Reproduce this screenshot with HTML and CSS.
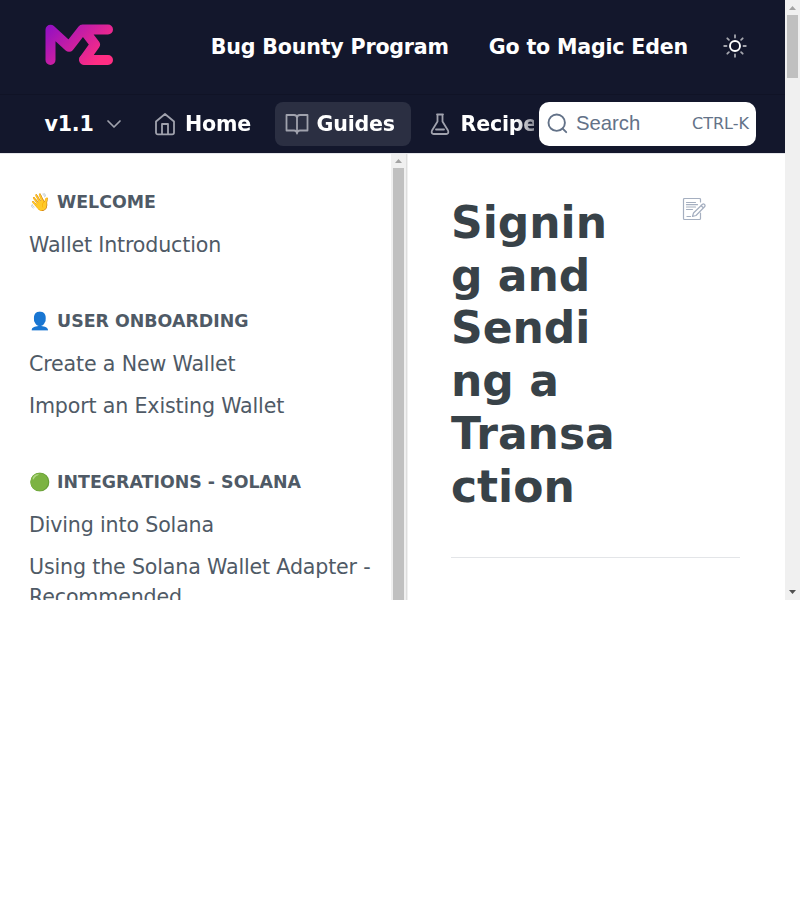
FILE: index.html
```html
<!DOCTYPE html>
<html lang="en">
<head>
<meta charset="utf-8">
<title>Signing and Sending a Transaction</title>
<link rel="stylesheet" href="styles.css">
</head>
<body>
<div class="viewport">
  <div class="page">
    <header class="header">
      <div class="topbar">
        <svg class="logo" width="70" height="42" viewBox="0 0 70 42">
          <defs><linearGradient id="brand" gradientUnits="userSpaceOnUse" x1="4" y1="2" x2="46" y2="44"><stop offset="0" stop-color="#9410c2"/><stop offset="1" stop-color="#ff2d83"/></linearGradient></defs>
          <g fill="none" stroke="url(#brand)" stroke-width="10" stroke-linecap="round" stroke-linejoin="round">
            <path d="M5.500 36V5.800L24 22.800 37.500 5.500H63M38.500 5.500L50 20.500 39 36H63"/>
            <path stroke-width="6" d="M50 20.500L37.500 34.500"/>
          </g>
        </svg>
        <nav class="toplinks"><a>Bug Bounty Program</a><a>Go to Magic Eden</a></nav>
        <svg class="sun" width="24" height="24" viewBox="0 0 24 24" fill="none" stroke="#fff" stroke-linecap="round">
          <circle cx="12" cy="12" r="5" stroke-width="1.9"/>
          <path stroke-width="1.8" opacity=".62" d="M12 1.200v2.300M12 20.500v2.300M1.200 12h2.300M20.500 12H22.800M4.300 4.300L5.900 5.900M18.100 18.100l1.600 1.600M4.300 19.700L5.900 18.100M18.100 5.900l1.600-1.600"/>
        </svg>
      </div>
      <div class="subbar">
        <div class="version">v1.1
          <svg width="16" height="10" viewBox="0 0 16 10"><path d="M2 2l6 6 6-6" fill="none" stroke="#a0a2ad" stroke-width="1.7" stroke-linecap="round" stroke-linejoin="round"/></svg>
        </div>
        <nav class="tabs">
          <a class="tab home"><svg width="22" height="24" viewBox="0 0 22 24"><path d="M2 9.500L11 2l9 7.500V20.500a1.800 1.800 0 0 1-1.800 1.800H3.800A1.800 1.800 0 0 1 2 20.500zM8 22V12h6v10"/></svg>Home</a>
          <a class="tab active"><svg width="24" height="24" viewBox="0 0 24 24"><path d="M12 6a3 3 0 0 0-3-3H1.500v15.500H9a3 3 0 0 1 3 2.500 3 3 0 0 1 3-2.500h7.500V3H15a3 3 0 0 0-3 3zV21.500"/></svg>Guides</a>
          <a class="tab recipes"><svg width="20" height="24" viewBox="0 0 20 24"><path d="M7 2.500h6M7.500 2.500v7L2 18.500c-.9 2 0 3.500 1.700 3.500h12.600c1.700 0 2.600-1.500 1.700-3.500L12.500 9.500V2.500M6 17.500h8"/></svg>Recipes</a>
        </nav>
        <div class="search">
          <svg width="22" height="22" viewBox="0 0 22 22" fill="none" stroke="#637288" stroke-width="1.900" stroke-linecap="round"><circle cx="9.700" cy="9.700" r="8.200"/><path d="M15.700 15.700l3.500 3.500"/></svg>
          <span class="label">Search</span><span class="keys">CTRL-K</span>
        </div>
      </div>
    </header>
    <main class="body">
      <aside class="sidebar">
        <section><h2><span class="emoji">👋</span> WELCOME</h2><a>Wallet Introduction</a></section>
        <section><h2><span class="emoji">👤</span> USER ONBOARDING</h2><a>Create a New Wallet</a><a>Import an Existing Wallet</a></section>
        <section><h2><span class="emoji">🟢</span> INTEGRATIONS - SOLANA</h2><a>Diving into Solana</a><a>Using the Solana Wallet Adapter - Recommended</a></section>
      </aside>
      <div class="scroll inner"><svg width="7" height="4" viewBox="0 0 7 4"><path d="M3.500 0L7 4H0z" fill="#a3a3a3"/></svg><div class="thumb"></div></div>
      <article class="content">
        <div class="title-row">
          <h1>Signing and Sending a Transaction</h1>
          <svg class="edit" width="24" height="24" viewBox="0 0 24 24" fill="none" stroke="#a5afc0" stroke-width="1.200" stroke-linejoin="round" stroke-linecap="round"><path d="M18.500 5V2.500a1 1 0 0 0-1-1H2.500a1 1 0 0 0-1 1v19a1 1 0 0 0 1 1H17.500a1 1 0 0 0 1-1V16M4.500 5.500h9M4.500 7.700h11M4.500 10h9M4.500 12.500h6M5 19.500h3.500M10.500 19.500l1-3.500 9-8.800q1-.7 2 .3t.3 2L14 18.500zM19 8.500l2 2"/></svg>
        </div>
        <hr>
      </article>
    </main>
  </div>
  <div class="scroll outer">
    <svg width="7" height="4" viewBox="0 0 7 4"><path d="M3.500 0L7 4H0z" fill="#a3a3a3"/></svg>
    <div class="thumb"></div>
    <svg class="down" width="7" height="4" viewBox="0 0 7 4"><path d="M0 0h7L3.500 4z" fill="#505050"/></svg>
  </div>
</div>
</body>
</html>
```
FILE: styles.css
```css
* { box-sizing: border-box; }
body { margin: 0; background: #fff; font-family: "DejaVu Sans", sans-serif; font-size: 20.6px; letter-spacing: -.16px; line-height: 30px; color: #4f5a66; }
svg { display: block; flex: none; }
.viewport { display: flex; height: 600px; overflow: hidden; }
.page { width: 785px; height: 600px; display: flex; flex-direction: column; overflow: hidden; }
.header { flex: none; height: 153px; background: #13172c; color: #fff; font-weight: 700; letter-spacing: -.2px; }
.topbar { height: 94px; padding: 0 39px 1px 45px; display: flex; align-items: center; }
.logo { margin-top: -3px; }
.toplinks { margin-left: auto; display: flex; gap: 40px; }
.sun { margin: -1px 0 0 34px; position: relative; left: .5px; }
.subbar { height: 59px; border-top: 1px solid #101326; padding: 6px 29px 7px 44.500px; display: flex; align-items: center; }
.version { width: 99.500px; flex: none; display: flex; align-items: center; gap: 12px; }
.tabs { width: 390px; flex: none; display: flex; overflow: hidden; -webkit-mask-image: linear-gradient(to right, #000 372px, rgba(0,0,0,.5)); mask-image: linear-gradient(to right, #000 372px, rgba(0,0,0,.5)); }
.tab { flex: none; height: 44px; display: flex; align-items: center; border-radius: 8px; }
.tab svg { fill: none; stroke: #a0a2ad; stroke-width: 1.800; stroke-linejoin: round; stroke-linecap: round; }
.home { width: 131px; padding-left: 10px; gap: 9px; }
.active { width: 136px; padding-left: 10px; gap: 7.500px; background: #2b2f42; }
.recipes { padding-left: 19px; gap: 10.500px; }
.search { margin-left: 5px; width: 217px; height: 44px; border-radius: 10px; background: #fff; display: flex; align-items: center; padding: 0 7px 0 8px; color: #637288; font-weight: 400; letter-spacing: 0; }
.label { margin: -1px 0 0 7px; font-family: "Liberation Sans", sans-serif; font-size: 20.3px; }
.keys { margin-left: auto; font-size: 16px; }
.body { flex: 1; min-height: 0; display: flex; border-top: 1px solid #e5e6ea; }
.sidebar { width: 391px; flex: none; padding: 33px 16px 0 29px; overflow: hidden; }
.sidebar section { margin-bottom: 46px; }
.sidebar h2 { margin: 0 0 13px; font-size: 17.400px; letter-spacing: 0; line-height: 30px; font-weight: 700; white-space: nowrap; }
.sidebar a { display: block; margin-bottom: 12px; }
.scroll { background: #f0f0f0; display: flex; flex-direction: column; align-items: center; }
.inner { width: 16px; flex: none; padding: 5px 1px 0 1px; border-right: 1px solid #dedede; }
.inner .thumb { width: 11px; flex: 1; margin-top: 5px; background: #c0c0c0; }
.outer { width: 15px; padding: 6px 0; }
.outer .thumb { width: 11px; height: 63px; margin-top: 5px; background: #c0c0c0; }
.down { margin-top: auto; }
.content { flex: 1; padding: 42.800px 45px 0 43px; border-left: 1px solid #f0f0f0; }
.title-row { display: flex; justify-content: space-between; }
.title-row h1 { margin: 0; width: 170px; font-size: 44px; letter-spacing: 0; line-height: 52.850px; color: #384248; word-break: break-word; }
.edit { margin: .2px 34px 0 0; }
hr { margin: 43px 0 0; border: 0; border-top: 1px solid #e3e5e8; }
```
